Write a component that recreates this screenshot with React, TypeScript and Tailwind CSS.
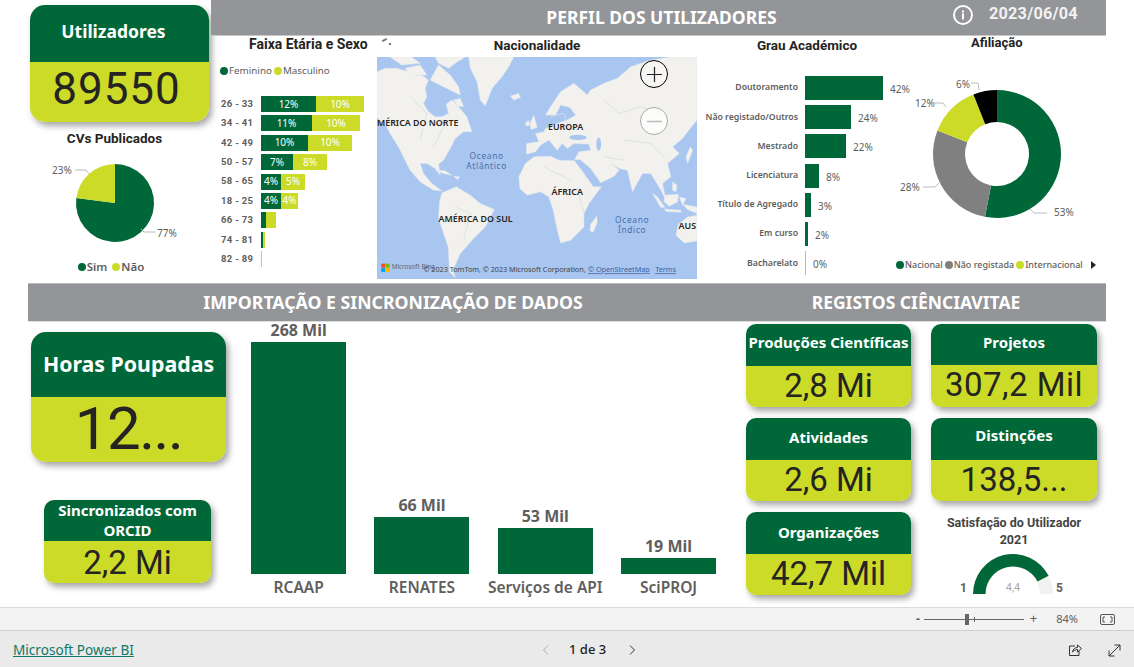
import React from "react";

const G = "#006838";
const L = "#cbdb27";

function Card({ title, value, h1, h2, titleClass, valueClass, radius = "rounded-[14px]", w }: any) {
  return (
    <div className={`${radius} overflow-hidden shadow-[3px_4px_6px_rgba(0,0,0,0.35)] flex flex-col`} style={{ width: w }}>
      <div className={`bg-[#006838] text-white flex items-center justify-center text-center font-['Noto_Sans'] font-bold ${titleClass}`} style={{ height: h1 }}>
        {title}
      </div>
      <div className={`bg-[#cbdb27] text-[#252423] flex items-center justify-center font-[Roboto] leading-none ${valueClass}`} style={{ height: h2 }}>
        {value}
      </div>
    </div>
  );
}

function slice(cx: number, cy: number, R: number, r: number, a0: number, a1: number) {
  const p = (rad: number, a: number) => {
    const t = (a * 2 * Math.PI) - Math.PI / 2;
    return `${(cx + rad * Math.cos(t)).toFixed(2)} ${(cy + rad * Math.sin(t)).toFixed(2)}`;
  };
  const large = a1 - a0 > 0.5 ? 1 : 0;
  if (r === 0) return `M${cx} ${cy}L${p(R, a0)}A${R} ${R} 0 ${large} 1 ${p(R, a1)}Z`;
  return `M${p(R, a0)}A${R} ${R} 0 ${large} 1 ${p(R, a1)}L${p(r, a1)}A${r} ${r} 0 ${large} 0 ${p(r, a0)}Z`;
}

const ages: [string, number, number, string, string][] = [
  ["26 - 33", 55, 48, "12%", "10%"],
  ["34 - 41", 51, 48, "11%", "10%"],
  ["42 - 49", 47, 44, "10%", "10%"],
  ["50 - 57", 32, 34, "7%", "8%"],
  ["58 - 65", 20, 24, "4%", "5%"],
  ["18 - 25", 20, 17, "4%", "4%"],
  ["66 - 73", 5, 10, "", ""],
  ["74 - 81", 2, 2, "", ""],
  ["82 - 89", 0, 1, "", ""],
];

const grau: [string, number, string][] = [
  ["Doutoramento", 78, "42%"],
  ["Não registado/Outros", 46, "24%"],
  ["Mestrado", 41, "22%"],
  ["Licenciatura", 14, "8%"],
  ["Título de Agregado", 6, "3%"],
  ["Em curso", 3, "2%"],
  ["Bacharelato", 1, "0%"],
];

const cols: [string, string, number][] = [
  ["RCAAP", "268 Mil", 232],
  ["RENATES", "66 Mil", 57],
  ["Serviços de API", "53 Mil", 46],
  ["SciPROJ", "19 Mil", 16],
];

function Legend({ c, t, cls }: any) {
  return (
    <span className={`flex items-center ${cls ?? ""}`}>
      <span className="w-[8px] h-[8px] rounded-full mr-[1px] shrink-0" style={{ background: c }} />
      {t}
    </span>
  );
}

function WorldMap() {
  const land = "#f2f1ed";
  const water = "#a9c6f0";
  const polys = [
    // North America
    "21,215 45,205 80,205 115,215 140,225 155,225 175,240 165,265 170,290 160,310 175,335 195,350 215,350 235,340 228,312 245,300 265,320 290,350 305,395 280,395 255,415 240,445 220,480 205,492 210,525 195,505 170,490 150,490 160,520 185,550 215,572 190,570 150,545 120,510 100,470 85,440 60,400 50,380 21,352",
    // Arctic islands
    "105,205 150,195 170,225 120,225",
    "180,240 205,195 240,225 265,260 270,285 230,265",
    "195,171 285,171 255,190 235,205 205,190",
    "60,171 125,171 150,190 95,195",
    "250,300 270,295 280,320 262,318",
    // Greenland, Iceland
    "295,171 430,171 415,200 395,230 365,265 345,318 330,300 320,245 300,205",
    "420,288 445,280 450,292 430,300",
    // Cuba / Hispaniola
    "195,510 225,512 245,525 220,520",
    "250,528 268,530 262,538",
    // South America
    "215,578 258,560 300,585 330,610 372,628 345,680 310,715 270,760 248,810 256,832 238,815 234,740 205,655 208,605",
    // Africa
    "445,530 465,490 490,470 540,468 565,480 612,482 640,520 668,560 692,560 655,610 640,640 640,680 600,720 570,728 558,680 548,630 535,590 510,575 470,585 448,565",
    // Eurasia
    "468,462 468,430 505,425 495,400 520,395 525,385 560,370 590,360 615,345 598,322 570,315 555,345 525,345 540,320 570,275 610,250 650,285 660,270 700,250 740,235 780,200 840,180 900,171 978,171 978,360 950,395 935,415 905,440 925,460 890,490 900,530 875,550 885,600 870,570 840,520 815,520 785,575 770,510 745,505 722,490 745,510 730,528 690,548 660,505 628,478 612,478 625,455 660,450 655,432 610,430 590,445 575,430 560,450 535,420 510,435 495,455",
    // Islands
    "478,372 490,345 500,382 482,388",
    "466,366 476,362 476,376 466,378",
    "945,470 958,440 965,450 950,490",
    "660,672 678,648 680,665 668,695 658,692",
    "880,585 922,582 920,605 895,618 880,605",
    "845,580 860,590 882,622 870,622",
    "880,626 930,630 930,636 885,634",
    "925,590 945,595 935,615",
    "935,612 978,620 978,640 950,628",
    "905,545 918,555 915,575 905,570",
    // Australia
    "922,672 950,650 978,645 978,722 940,728 915,705",
  ];
  const labels: [number, number, string, string][] = [
    [21, 377, "MÉRICA DO NORTE", "start"],
    [585, 391, "EUROPA", "middle"],
    [590, 584, "ÁFRICA", "middle"],
    [316, 665, "AMÉRICA DO SUL", "middle"],
    [923, 686, "AUS", "start"],
  ];
  const face = "'Noto Sans', sans-serif";
  return (
    <svg viewBox="21 171 957 665" className="w-[320px] h-[222px] block" preserveAspectRatio="none">
      <rect x="21" y="171" width="957" height="665" fill={water} />
      {polys.map((p, i) => (
        <polygon key={i} points={p} fill={land} stroke="#dfe6ef" strokeWidth="1.5" strokeLinejoin="round" />
      ))}
      <ellipse cx="684" cy="432" rx="7" ry="20" fill={water} />
      <ellipse cx="622" cy="412" rx="26" ry="8" fill={water} />
      <path d="M120 290L170 340L150 420M225 370L190 440M255 620L300 640L280 720M540 350L580 340L600 400M700 300L745 340L810 320L880 345M760 420L840 430L880 470M620 560L640 640M520 500L600 540M700 470L760 480" stroke="#d9dfe6" strokeWidth="2.5" fill="none" />
      {labels.map(([x, y, t, a]) => (
        <text key={t} x={x} y={y} fontSize="26.5" fontWeight="600" fill="#252423" textAnchor={a as any} fontFamily={face}>{t}</text>
      ))}
      <text x="349" y="476" fontSize="25" fill="#4a6fa8" textAnchor="middle" letterSpacing="2" fontFamily={face}>Oceano</text>
      <text x="349" y="506" fontSize="25" fill="#4a6fa8" textAnchor="middle" letterSpacing="2" fontFamily={face}>Atlântico</text>
      <text x="784" y="668" fontSize="25" fill="#4a6fa8" textAnchor="middle" letterSpacing="2" fontFamily={face}>Oceano</text>
      <text x="784" y="698" fontSize="25" fill="#4a6fa8" textAnchor="middle" letterSpacing="2" fontFamily={face}>Índico</text>
      <rect x="34" y="790" width="12" height="12" fill="#f25022" />
      <rect x="47" y="790" width="12" height="12" fill="#7fba00" />
      <rect x="34" y="803" width="12" height="12" fill="#00a4ef" />
      <rect x="47" y="803" width="12" height="12" fill="#ffb900" />
      <text x="65" y="807" fontSize="19" fill="#666" fontFamily={face}>Microsoft Bing</text>
      <text x="160" y="816" fontSize="22" fill="#444" fontFamily={face} textLength="485">© 2023 TomTom, © 2023 Microsoft Corporation,</text>
      <text x="652" y="816" fontSize="22" fill="#3b63a8" textDecoration="underline" fontFamily={face} textLength="185">© OpenStreetMap</text>
      <text x="853" y="816" fontSize="22" fill="#3b63a8" textDecoration="underline" fontFamily={face} textLength="62">Terms</text>
    </svg>
  );
}

export default function App() {
  return (
    <div className="w-[1134px] h-[667px] overflow-hidden bg-white flex flex-col font-['Noto_Sans',sans-serif]">
      <div className="h-[607px] shrink-0 overflow-hidden">
        {/* top */}
        <div className="flex h-[283px]">
          <div className="ml-[30px] w-[179px] pt-[5px] flex flex-col items-center">
            <Card w={179} h1={57} h2={60} radius="rounded-[15px]" title="Utilizadores" titleClass="text-[17.5px] pb-[4px] pr-[12px]" value="89550" valueClass="text-[44px] tracking-[1px] pb-[6px] pr-[6px]" />
            <div className="mt-[6px] pr-[10px] text-[13.5px] leading-[20px] font-[Roboto] font-bold text-[#252423]">CVs Publicados</div>
            <svg width="179" height="118" viewBox="0 0 179 118" className="block mt-[2px]">
              <path d={slice(85, 53, 39, 0, 0, 0.77)} fill={G} />
              <path d={slice(85, 53, 39, 0, 0.77, 1)} fill={L} />
              <path d="M45 20H56L59 24" stroke="#bbb" fill="none" />
              <path d="M111 79L114 82H126" stroke="#bbb" fill="none" />
              <text x="22" y="24" fontSize="10" fill="#605e5c">23%</text>
              <text x="127" y="87" fontSize="10" fill="#605e5c">77%</text>
            </svg>
            <div className="flex gap-[5px] -mt-[8px] text-[11.5px] leading-[14px] text-[#605e5c] font-semibold pr-[17px]">
              <Legend c={G} t="Sim" />
              <Legend c={L} t="Não" />
            </div>
          </div>
          <div className="ml-[2px] w-[895px] flex flex-col">
            <div className="h-[36px] bg-[#939598] border-b border-[#c8c8c8] flex items-center relative text-white font-bold">
              <div className="w-full text-center text-[17.5px] pl-[6px]">PERFIL DOS UTILIZADORES</div>
              <div className="absolute left-[741px] top-[4px] flex items-center">
                <svg width="22" height="22" viewBox="0 0 22 22">
                  <circle cx="11" cy="11" r="9" stroke="#fff" strokeWidth="2" fill="none" />
                  <rect x="10" y="9.5" width="2" height="6" fill="#fff" />
                  <rect x="10" y="6.5" width="2" height="2" fill="#fff" />
                </svg>
                <span className="ml-[15px] font-[Roboto] text-[16.3px] text-[#f2f2f2] tracking-[0.2px] -mt-[2px]">2023/06/04</span>
              </div>
            </div>
            <div className="flex flex-1">
              {/* faixa */}
              <div className="w-[166px]">
                <div className="text-[14px] leading-[16px] font-[Roboto] font-bold text-[#252423] pl-[38px] whitespace-nowrap">Faixa Etária e Sexo</div>
                <div className="flex gap-[2px] text-[9.8px] leading-[12px] mt-[13px] ml-[9px] text-[#605e5c]">
                  <Legend c={G} t="Feminino" />
                  <Legend c={L} t="Masculino" />
                </div>
                <div className="mt-[19px] flex flex-col gap-[3.4px]">
                  {ages.map(([a, f, m, fl, ml]) => (
                    <div key={a} className="flex items-center h-[16px]">
                      <div className="w-[50px] pl-[10px] text-[9.5px] font-bold tracking-[0.3px] text-[#605e5c] whitespace-nowrap font-[Roboto]">{a}</div>
                      <div className="text-white text-[10px] h-[16px] flex items-center justify-center" style={{ width: f, background: G }}>{fl}</div>
                      <div className="text-white text-[10px] h-[16px] flex items-center justify-center" style={{ width: m, background: L }}>{ml}</div>
                    </div>
                  ))}
                </div>
              </div>
              {/* mapa */}
              <div className="w-[320px]">
                <div className="h-[21px] pb-[3px] flex items-center justify-center text-[13.5px] font-[Roboto] font-bold text-[#252423] relative">
                  Nacionalidade
                  <span className="absolute left-[5px] top-[3px] w-[5px] h-[2px] bg-[#777] -rotate-[25deg]" />
                  <span className="absolute left-[12px] top-[7px] w-[2px] h-[2px] bg-[#777]" />
                </div>
                <div className="relative w-[320px] h-[222px]">
                  <WorldMap />
                  <div className="absolute left-[263px] top-[3px] w-[28px] h-[28px] rounded-full border border-black bg-white/40 flex items-center justify-center">
                    <svg width="17" height="17" viewBox="0 0 17 17"><path d="M8.5 1V16M1 8.5H16" stroke="#222" strokeWidth="1.2" /></svg>
                  </div>
                  <div className="absolute left-[263px] top-[50px] w-[28px] h-[28px] rounded-full border border-[#aaa] bg-white/80 flex items-center justify-center">
                    <svg width="17" height="3" viewBox="0 0 17 3"><path d="M1 1.5H16" stroke="#bbb" strokeWidth="1.5" /></svg>
                  </div>
                </div>
              </div>
              {/* grau */}
              <div className="w-[197px]">
                <div className="h-[19px] text-[13.5px] font-[Roboto] font-bold text-[#252423] text-center pl-[23px] leading-[18px]">Grau Académico</div>
                <div className="mt-[21px] flex flex-col gap-[5.2px]">
                  {grau.map(([n, w, p], i) => (
                    <div key={n} className="flex items-center h-[24px]">
                      <div className="w-[101px] shrink-0 text-right text-[8.7px] font-semibold whitespace-nowrap text-[#605e5c]">{n}</div>
                      <div className="ml-[7px] h-[24px] shrink-0" style={{ width: w, background: i === 6 ? "#9cc7b0" : G }} />
                      <div className="ml-[7px] mt-[3px] text-[10px] text-[#605e5c] shrink-0">{p}</div>
                    </div>
                  ))}
                </div>
              </div>
              {/* afiliacao */}
              <div className="w-[212px]">
                <div className="h-[17px] text-[13px] leading-[14px] font-[Roboto] font-bold text-[#252423] pl-[77px]">Afiliação</div>
                <svg width="212" height="190" viewBox="0 0 212 190" className="block mt-[7px]">
                  <path d={slice(103, 94, 64, 32, 0, 0.53)} fill={G} />
                  <path d={slice(103, 94, 64, 32, 0.53, 0.81)} fill="#808080" />
                  <path d={slice(103, 94, 64, 32, 0.81, 0.94)} fill={L} />
                  <path d={slice(103, 94, 64, 32, 0.94, 1)} fill="#000" />
                  <text x="62" y="28" fontSize="10" fill="#605e5c">6%</text>
                  <text x="21" y="47" fontSize="10" fill="#605e5c">12%</text>
                  <text x="6" y="131" fontSize="10" fill="#605e5c">28%</text>
                  <text x="160" y="156" fontSize="10" fill="#605e5c">53%</text>
                  <path d="M77 23H84L85 30M38 43H49L52 47M29 127H41L45 123M136 149L140 153H153" stroke="#bbb" fill="none" />
                </svg>
                <div className="mt-[9px] ml-[2px] flex gap-[2px] text-[9px] leading-[12px] font-medium text-[#605e5c] items-center whitespace-nowrap">
                  <Legend c={G} t="Nacional" />
                  <Legend c="#808080" t="Não registada" />
                  <Legend c={L} t="Internacional" />
                  <svg width="5" height="8" viewBox="0 0 5 8" className="ml-[6px]"><path d="M0 0L5 4L0 8Z" fill="#252423" /></svg>
                </div>
              </div>
            </div>
          </div>
        </div>
        {/* section header */}
        <div className="ml-[28px] w-[1078px] h-[39px] bg-[#939598] border-t border-[#bbb] border-b border-b-[#ddd] flex items-center text-white font-bold">
          <div className="w-[730px] text-center text-[17.7px]">IMPORTAÇÃO E SINCRONIZAÇÃO DE DADOS</div>
          <div className="w-[316px] text-center text-[17.5px]">REGISTOS CIÊNCIAVITAE</div>
        </div>
        {/* bottom */}
        <div className="flex">
          <div className="ml-[31px] w-[196px] flex flex-col">
            <div className="mt-[10px]">
              <Card w={195} h1={65} h2={65} radius="rounded-[15px]" title="Horas Poupadas" titleClass="text-[21.3px] pb-[2px]" value="12..." valueClass="text-[60px] tracking-[-1.5px] pb-[2px]" />
            </div>
            <div className="mt-[38px] ml-[13px]">
              <Card w={167} h1={41} h2={42} radius="rounded-[10px]" title={<>Sincronizados com<br />ORCID</>} titleClass="text-[15px] leading-[20px] pb-[2px]" value="2,2 Mi" valueClass="text-[33px]" />
            </div>
          </div>
          <div className="ml-[10px] w-[498px] flex h-[285px]">
            {cols.map(([n, v, h]) => (
              <div key={n} className="w-[123.3px] flex flex-col items-center text-[#605e5c] font-bold">
                <div className="h-[252px] flex flex-col justify-end items-center">
                  <div className="text-[16px] leading-[16px] whitespace-nowrap mb-[4px]">{v}</div>
                  <div className="w-[95px] bg-[#006838]" style={{ height: h }} />
                </div>
                <div className="h-[33px] pt-[3px] text-[15.5px] leading-[20px] font-semibold whitespace-nowrap">{n}</div>
              </div>
            ))}
          </div>
          <div className="ml-[11px] flex gap-[20px] pt-[2px]">
            <div className="flex flex-col gap-[11px]">
              <Card w={165} h1={42} h2={41} radius="rounded-[10px]" title="Produções Científicas" titleClass="text-[15px] whitespace-nowrap pb-[6px]" value="2,8 Mi" valueClass="text-[33px] pb-[3px]" />
              <Card w={165} h1={42} h2={41} radius="rounded-[10px]" title="Atividades" titleClass="text-[15px] pb-[4px]" value="2,6 Mi" valueClass="text-[33px] pb-[3px]" />
              <Card w={165} h1={42} h2={41} radius="rounded-[10px]" title="Organizações" titleClass="text-[15px] pb-[2px]" value="42,7 Mil" valueClass="text-[33px] pb-[3px]" />
            </div>
            <div className="flex flex-col gap-[11px]">
              <Card w={166} h1={41} h2={42} radius="rounded-[10px]" title="Projetos" titleClass="text-[15px] pb-[4px]" value="307,2 Mil" valueClass="text-[33px] tracking-[0.5px] pb-[3px]" />
              <Card w={166} h1={42} h2={41} radius="rounded-[10px]" title="Distinções" titleClass="text-[15px] pb-[7px]" value="138,5..." valueClass="text-[33px] pb-[3px]" />
              <div className="w-[166px] flex flex-col items-center">
                <div className="text-[12.5px] leading-[17px] mt-[2px] text-center font-[Roboto] font-bold text-[#444]">Satisfação do Utilizador<br />2021</div>
                <svg width="166" height="42" viewBox="0 0 166 42" className="block mt-[6px]">
                  <path d="M42 40A40 40 0 0 1 122 40H109A27 27 0 0 0 55 40Z" fill="#f1f1f1" />
                  <path d={`M42 40A40 40 0 0 1 ${(82 - 40 * Math.cos(0.85 * Math.PI)).toFixed(2)} ${(40 - 40 * Math.sin(0.85 * Math.PI)).toFixed(2)}L${(82 - 27.5 * Math.cos(0.85 * Math.PI)).toFixed(2)} ${(40 - 27.5 * Math.sin(0.85 * Math.PI)).toFixed(2)}A27.5 27.5 0 0 0 54.5 40Z`} fill={G} />
                  <text x="82" y="37" fontSize="11" fill="#aaa" textAnchor="middle" fontFamily="Roboto">4,4</text>
                  <text x="29" y="38" fontSize="12" fontWeight="700" fill="#605e5c" fontFamily="Roboto">1</text>
                  <text x="125" y="38" fontSize="12" fontWeight="700" fill="#605e5c" fontFamily="Roboto">5</text>
                </svg>
              </div>
            </div>
          </div>
        </div>
      </div>
      {/* zoom bar */}
      <div className="h-[23px] shrink-0 bg-[#f3f3f3] border-t border-[#dcdcdc] flex items-center justify-end text-[#605e5c] text-[11px]">
        <span className="text-[12px] font-bold mr-[4px]">-</span>
        <div className="relative w-[100px] h-[1px] bg-[#666]">
          <span className="absolute left-[41px] -top-[5px] w-[4px] h-[11px] bg-[#666]" />
          <span className="absolute left-[50px] -top-[2px] w-[1px] h-[5px] bg-[#666]" />
        </div>
        <span className="text-[13px] ml-[6px]">+</span>
        <span className="ml-[19px]">84%</span>
        <svg width="15" height="11" viewBox="0 0 15 11" className="ml-[22px] mr-[19px]">
          <rect x="0.5" y="0.5" width="14" height="10" rx="1.5" fill="none" stroke="#555" />
          <path d="M5 3H3V8H5M10 3H12V8H10" fill="none" stroke="#555" />
        </svg>
      </div>
      {/* footer */}
      <div className="flex-1 bg-[#eaeaea] border-t border-[#cfcfcf] flex items-center relative text-[13px] pt-[2px]">
        <a className="ml-[13px] text-[13.6px] text-[#117865] underline whitespace-nowrap">Microsoft Power BI</a>
        <div className="absolute left-[541px] flex items-center text-[#252423] text-[13px]">
          <svg width="10" height="12" viewBox="0 0 10 12"><path d="M7 1.5L2.5 6L7 10.5" fill="none" stroke="#aaa" /></svg>
          <span className="ml-[18px] font-medium">1 de 3</span>
          <svg width="10" height="12" viewBox="0 0 10 12" className="ml-[21px]"><path d="M3 1.5L7.5 6L3 10.5" fill="none" stroke="#333" /></svg>
        </div>
        <div className="ml-auto flex items-center mr-[13px] gap-[26px]">
          <svg width="14" height="14" viewBox="0 0 14 14">
            <path d="M7 3H1.5V12.5H11V8" fill="none" stroke="#333" />
            <path d="M4.5 9C5 6 7 4.5 9.5 4.5V2L13.5 5.5L9.5 9V6.5C7.5 6.5 6 7.5 4.5 9Z" fill="none" stroke="#333" />
          </svg>
          <svg width="13" height="13" viewBox="0 0 13 13">
            <path d="M1 12L12 1M6.5 1H12V6.5M1 6.5V12H6.5" fill="none" stroke="#333" />
          </svg>
        </div>
      </div>
    </div>
  );
}
